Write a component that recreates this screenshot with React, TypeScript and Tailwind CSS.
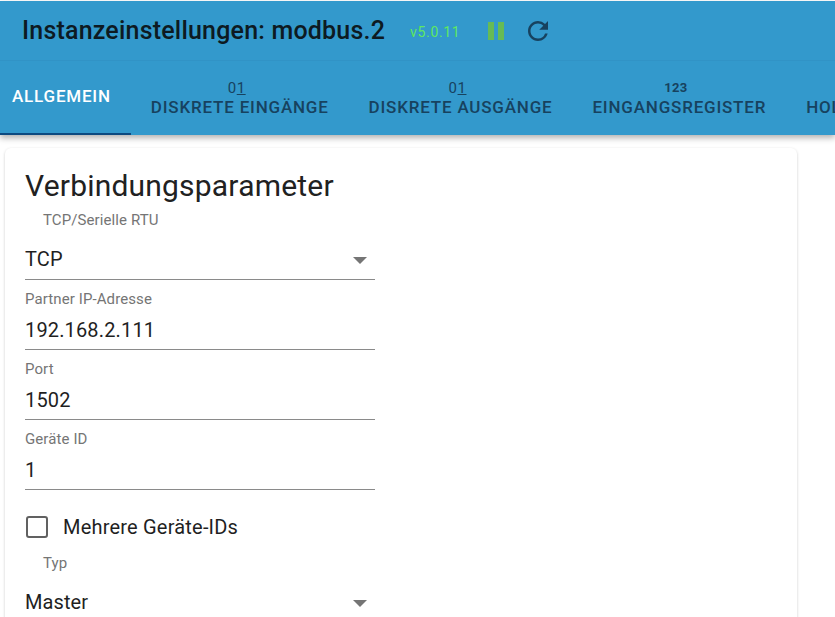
const font = { fontFamily: "Roboto, sans-serif" };

function TabItem({ label, active, icon }: { label: string; active?: boolean; icon?: React.ReactNode }) {
  return (
    <div
      className={`relative flex h-[74px] shrink-0 flex-col items-center justify-center px-5 text-[17px] font-medium leading-[18px] tracking-[0.8px] ${
        active ? "pb-[4px] text-white" : "text-[#17425f]"
      }`}
    >
      {icon}
      <span className="whitespace-nowrap">{label}</span>
    </div>
  );
}

function BinaryIcon() {
  return (
    <div className="mb-[3px] mr-[6px] h-[14px] text-[15px] font-normal leading-[14px] tracking-[0.5px]">
      0<span className="underline decoration-1 underline-offset-1">1</span>
    </div>
  );
}

function NumberIcon() {
  return <div className="mb-[3px] mr-[7px] h-[14px] text-[13px] font-bold leading-[14px] tracking-[0.3px]">123</div>;
}

function Field({ label, value }: { label: string; value: string }) {
  return (
    <div className="w-[350px]">
      <div className="h-[20px] text-[15px] leading-[18px] tracking-[0.1px] text-[#757575]">{label}</div>
      <div className="h-[40px] border-b border-[#8a8a8a] pt-[7px] text-[20px] leading-[26px] tracking-[0.15px] text-[#1f1f1f]">
        {value}
      </div>
    </div>
  );
}

function SelectField({ label, value }: { label: string; value: string }) {
  return (
    <div className="w-[350px]">
      <div className="h-[20px] pl-[18px] text-[15px] leading-[20px] tracking-[0.1px] text-[#757575]">{label}</div>
      <div className="flex h-[50px] items-center justify-between border-b border-[#8a8a8a] pt-[8px] text-[20px] tracking-[0.1px] text-[#1f1f1f]">
        <span>{value}</span>
        <div className="mr-[8px] mt-[4px] h-0 w-0 border-x-[7px] border-t-[7px] border-x-transparent border-t-[#757575]" />
      </div>
    </div>
  );
}

export default function App() {
  return (
    <div className="h-[617px] w-[835px] overflow-hidden bg-white pt-[1px]" style={font}>
      {/* Header */}
      <header className="bg-[#3399cc] shadow-[0_3px_6px_rgba(0,0,0,0.3)]">
        <div className="flex h-[60px] items-center border-b border-[#3193c6] pl-[22px]">
          <h1 className="text-[25px] font-medium tracking-[0.2px] text-[#0d1a22]">Instanzeinstellungen: modbus.2</h1>
          <span className="ml-[25px] mt-[3px] text-[14px] tracking-[0.65px] text-[#5fe85f]">v5.0.11</span>
          <div className="ml-[28px] flex gap-[4px]">
            <div className="h-[18px] w-[6px] bg-[#66bb55]" />
            <div className="h-[18px] w-[6px] bg-[#66bb55]" />
          </div>
          <svg className="ml-[19px]" width="30" height="30" viewBox="0 0 24 24" fill="#17425f">
            <path d="M17.65 6.35A7.958 7.958 0 0 0 12 4c-4.42 0-7.99 3.58-7.99 8s3.57 8 7.99 8c3.73 0 6.84-2.55 7.73-6h-2.08A5.99 5.99 0 0 1 12 18c-3.31 0-6-2.69-6-6s2.69-6 6-6c1.66 0 3.14.69 4.22 1.78L13 11h7V4l-2.35 2.35z" />
          </svg>
        </div>
        <nav className="flex overflow-hidden">
          <div className="relative">
            <div className="-ml-[8px]">
              <TabItem label="ALLGEMEIN" active />
            </div>
            <div className="absolute bottom-0 left-0 right-0 h-[2px] bg-[#0d4a80]" />
          </div>
          <TabItem label="DISKRETE EINGÄNGE" icon={<BinaryIcon />} />
          <TabItem label="DISKRETE AUSGÄNGE" icon={<BinaryIcon />} />
          <TabItem label="EINGANGSREGISTER" icon={<NumberIcon />} />
          <TabItem label="HOLDING REGISTER" icon={<NumberIcon />} />
        </nav>
      </header>

      {/* Card */}
      <main className="pl-[5px] pt-[13px]">
        <section className="h-[600px] w-[792px] rounded-[6px] bg-white pl-[20px] pt-[19px] shadow-[0_1px_3px_rgba(0,0,0,0.2)]">
          <h2 className="mb-[5px] text-[30px] leading-[38px] tracking-[0.2px] text-[#212121]">Verbindungsparameter</h2>
          <SelectField label="TCP/Serielle RTU" value="TCP" />
          <div className="mt-[10px] flex flex-col gap-[10px]">
            <Field label="Partner IP-Adresse" value="192.168.2.111" />
            <Field label="Port" value="1502" />
            <Field label="Geräte ID" value="1" />
          </div>
          <div className="mt-[25px] flex h-[24px] items-center">
            <div className="ml-[1px] h-[22px] w-[22px] rounded-[3px] border-[2px] border-[#616161]" />
            <span className="ml-[15px] text-[20px] tracking-[0.2px] text-[#1f1f1f]">Mehrere Geräte-IDs</span>
          </div>
          <div className="mt-[14px]">
            <SelectField label="Typ" value="Master" />
          </div>
        </section>
      </main>
    </div>
  );
}
